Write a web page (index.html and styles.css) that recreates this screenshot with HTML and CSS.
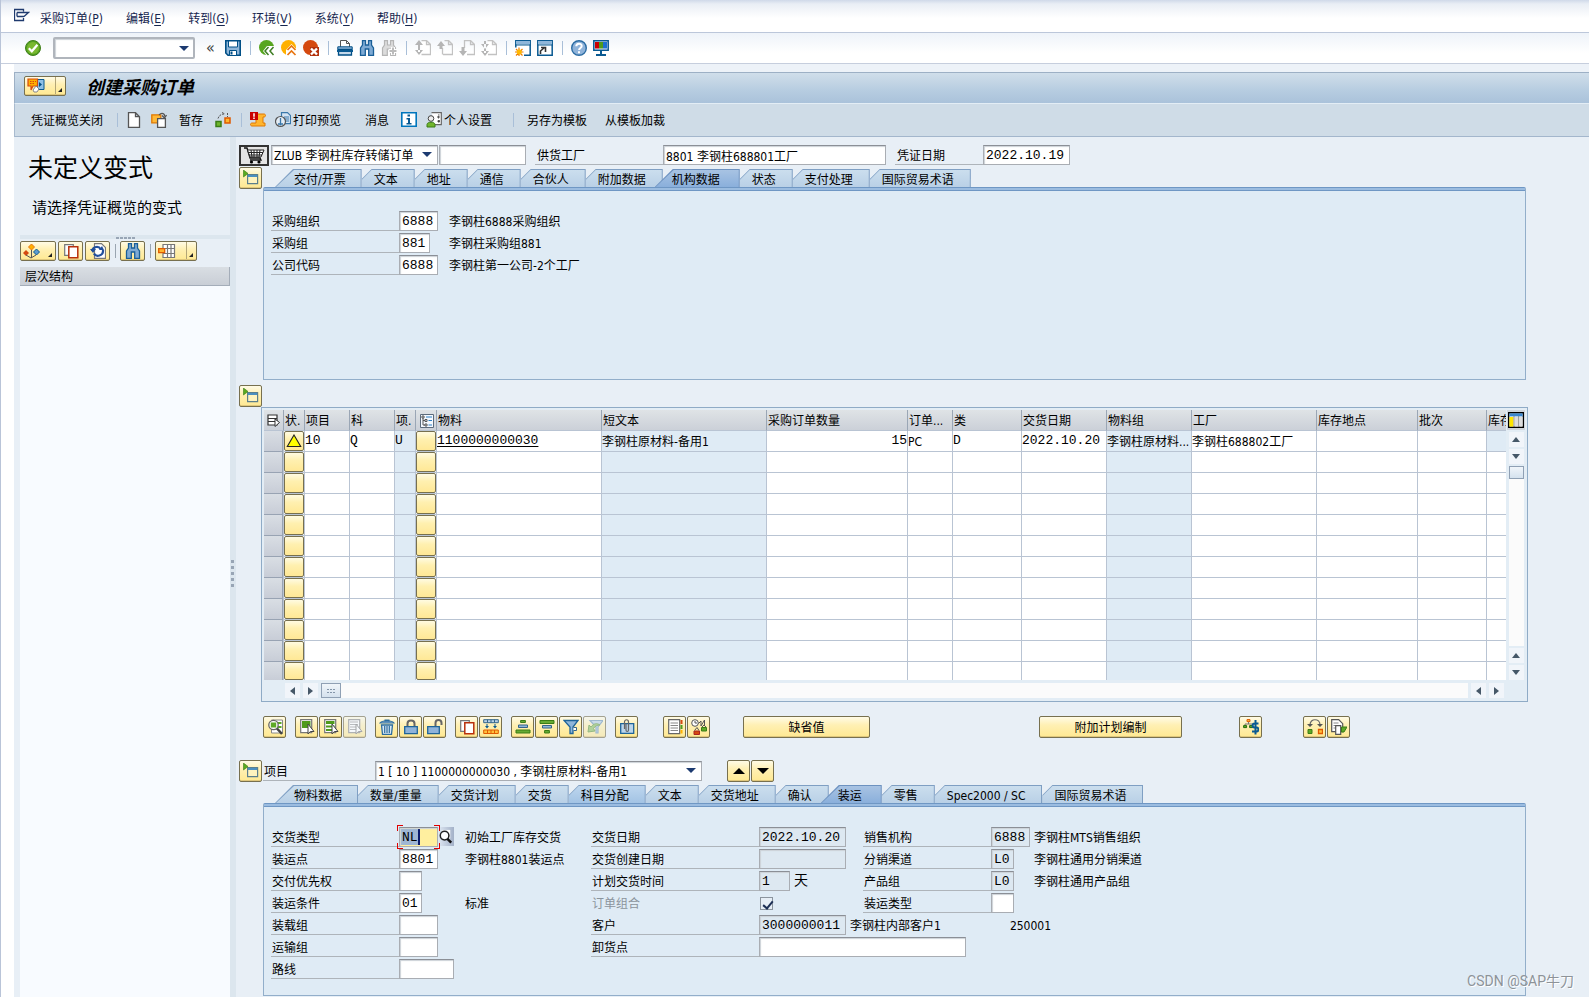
FILE: index.html
```html
<!DOCTYPE html>
<html lang="zh-CN">
<head>
<meta charset="utf-8">
<title>创建采购订单</title>
<link rel="stylesheet" href="styles.css">
</head>
<body>
<svg class="sprite" aria-hidden="true">
  <symbol id="i-sys" viewBox="0 0 16 14"><path d="M9.500 3.500V1.500H.5v11h9V10M3 4.500h11.500L10 8.500M3 8.500h7M3 4.500v4" fill="none" stroke="#1f3a6e" stroke-width="1.300"/></symbol>
  <symbol id="i-ok" viewBox="0 0 16 16"><circle cx="8" cy="8" r="7.500" fill="#54a021" stroke="#3f7f1a"/><circle cx="8" cy="8" r="6" fill="#79b82f"/><path d="M3.800 8.300l3 3 5.600-6.600" fill="none" stroke="#fff" stroke-width="2.200"/></symbol>
  <symbol id="i-save" viewBox="0 0 16 16"><path d="M.8.800h14.400v14.400H3L.8 13z" fill="#8fb6d9" stroke="#004f86" stroke-width="1.600"/><path d="M3.500 1h9v6h-9z" fill="#fff" stroke="#004f86"/><path d="M4.500 10.500h7v5h-7z" fill="#fff" stroke="#004f86"/><path d="M5.500 11.500h2v3h-2z" fill="#004f86"/></symbol>
  <symbol id="i-back" viewBox="0 0 16 16"><circle cx="7.500" cy="7.500" r="7.500" fill="#57a51f"/><path d="M4 11l4-5h8v10H8z" fill="#fff"/><path d="M9.500 7L6 11l3.500 4M14.500 7L11 11l3.500 4" fill="none" stroke="#3e7d22" stroke-width="1.500"/></symbol>
  <symbol id="i-exit" viewBox="0 0 16 16"><circle cx="7.500" cy="7.500" r="7.500" fill="#ffb000"/><path d="M5 10l5.500-6L16 10v6H5z" fill="#fff"/><path d="M6.500 10l4-4 4 4M6.500 15l4-4 4 4" fill="none" stroke="#e87511" stroke-width="1.700"/></symbol>
  <symbol id="i-cancel" viewBox="0 0 16 16"><circle cx="7.500" cy="7.500" r="7.500" fill="#d5490f"/><path d="M7 7h9v9H7z" fill="#b2320c"/><path d="M8 8.500l6 6M14 8.500l-6 6" stroke="#fff" stroke-width="2.400"/></symbol>
  <symbol id="i-print" viewBox="0 0 16 16"><path d="M3.500 7V.5h6l3 3V7M9.500.5v3h3" fill="#fff" stroke="#555"/><path d="M.8 6.800h14.400v3H.8z" fill="#8fb6d9" stroke="#004f86"/><path d="M1.500 9.500h13V15h-13z" fill="#c5d9eb" stroke="#004f86" stroke-width="1.300"/><path d="M0 10h16v2H0z" fill="#0a5a92"/></symbol>
  <symbol id="i-find" viewBox="0 0 16 16"><path d="M3.500.7h3V5h3V.7h3V5l2 3v7.300H9.700V9H6.300v6.300H1.500V8l2-3z" fill="#7eaad4" stroke="#1a5f98" stroke-width="1.300"/></symbol>
  <symbol id="i-next" viewBox="0 0 16 16"><path d="M3.500.7h3V5h3V.7h3V5l2 3v7.300H9.700V9H6.300v6.300H1.500V8l2-3z" fill="#dcdcdc" stroke="#b5b5b5" stroke-width="1.200"/><path d="M8 11h8M12 7v8" stroke="#fff" stroke-width="4"/><path d="M8.500 11h7M12 7.500v7" stroke="#bbb" stroke-width="2"/></symbol>
  <symbol id="i-pfirst" viewBox="0 0 16 16"><path d="M6.500 14.500h9v-10l-4-4h-5M11.500.5v4h4" fill="#fff" stroke="#c2c2c2" stroke-width="1.300"/><path d="M0 5l4-5 4 5zM0 10l4 5 4-5zM3 4h2v8H3z" fill="#b5b5b5"/></symbol>
  <symbol id="i-pup" viewBox="0 0 16 16"><path d="M6 14.500h9.500v-10l-4-4h-4M11.500.5v4h4M5.500 8v6.500" fill="none" stroke="#c2c2c2" stroke-width="1.300"/><path d="M0 6l4-5 4 5H5.500v3h-3V6z" fill="#b5b5b5"/></symbol>
  <symbol id="i-pdn" viewBox="0 0 16 16"><path d="M8 14.500h7.500v-10l-4-4h-6V8M11.500.5v4h4" fill="none" stroke="#c2c2c2" stroke-width="1.300"/><path d="M0 11l4 5 4-5H5.500V7h-3v4z" fill="#b5b5b5"/></symbol>
  <symbol id="i-plast" viewBox="0 0 16 16"><path d="M7 14.500h8.500v-10l-4-4h-5M11.500.5v4h4" fill="#fff" stroke="#c2c2c2" stroke-width="1.300"/><path d="M0 4l4 5 4-5zM0 11l4 5 4-5zM3 1h2v12H3z" fill="#b5b5b5"/></symbol>
  <symbol id="i-new" viewBox="0 0 16 16"><path d="M.8.800h14.400v14.400H.8z" fill="#fff" stroke="#0a5a92" stroke-width="1.500"/><path d="M1 1h14v3.500H1z" fill="#8fb6d9"/><path d="M0 5h16" stroke="#0a5a92"/><path d="M0 7.500h9V16H0z" fill="#fff"/><path d="M4 7.500v9M0 12h8.500M1 9l6.500 6.500M7.500 9L1 15.500" stroke="#ee7d00" stroke-width="1.200"/><circle cx="4.200" cy="12" r="2.500" fill="#ffb900"/></symbol>
  <symbol id="i-short" viewBox="0 0 16 16"><path d="M.8.800h14.400v14.400H.8z" fill="#fff" stroke="#0a5a92" stroke-width="1.500"/><path d="M1 1h14v3.500H1z" fill="#8fb6d9"/><path d="M0 5h16" stroke="#0a5a92"/><path d="M3.500 14v-3l4-3.500M4 7.500h4.500V12" fill="none" stroke="#333" stroke-width="1.600"/></symbol>
  <symbol id="i-help" viewBox="0 0 16 16"><circle cx="8" cy="8" r="7.300" fill="#8fb3da" stroke="#2b6ca3" stroke-width="1.400"/><path d="M5.300 6.200c0-3.400 5.400-3.300 5.400-.2 0 2-2.600 1.900-2.600 4M8 11.300v2" fill="none" stroke="#fff" stroke-width="2"/></symbol>
  <symbol id="i-lay" viewBox="0 0 16 16"><path d="M.8.800h14.400v9.400H.8z" fill="#eef" stroke="#0a5a92" stroke-width="1.500"/><path d="M2 2h4v6.500H2z" fill="#c00"/><path d="M6 2h4v6.500H6z" fill="#4f9b1c"/><path d="M10 2h4v6.500h-4z" fill="#1c6fd0"/><path d="M7 10h2v4h4v2H3v-2h4z" fill="#0a5a92"/></symbol>
  <symbol id="i-msg" viewBox="0 0 18 16"><path d="M10 1.500h7v10h-7z" fill="#8fc0e6" stroke="#0a5a92"/><path d="M12 4l3 2.500L12 9z" fill="#004f86"/><path d="M1 1h9.500v7H6l-2 4V8H1z" fill="#ffb000" stroke="#d5490f" stroke-width="1.200"/><path d="M3 3.500h6M3 5.500h5" stroke="#d5490f" stroke-dasharray="1.500 1"/><path d="M6 12l3-4 3 3-2 3H7z" fill="#fff" stroke="#888"/></symbol>
  <symbol id="i-doc" viewBox="0 0 16 16"><path d="M2.500.7h7l4 4v10.600h-11zM9.500.7v4h4" fill="#fff" stroke="#555" stroke-width="1.300"/></symbol>
  <symbol id="i-cpy" viewBox="0 0 16 16"><path d="M.8 2.800h9v8h-9z" fill="#ffb937" stroke="#e07800" stroke-width="1.300"/><path d="M6.600 6.600h7.800v8.800H6.600z" fill="#fff" stroke="#555" stroke-width="1.300"/><path d="M8 3c3-3 6-1 5.500 1.500M11 3.500l2.500 2.500L15.500 3" fill="none" stroke="#555" stroke-width="1.300"/></symbol>
  <symbol id="i-hold" viewBox="0 0 16 16"><path d="M1 9.500h5v5H1z" fill="#6fb62c" stroke="#3a7d16" stroke-width="1.500"/><path d="M10 6h5v5h-5z" fill="#ffb62e" stroke="#e05a00" stroke-width="1.500"/><path d="M3 6.500C4 3 7 2 9 2M7 .5L10 2M12.500 1v4" fill="none" stroke="#555" stroke-dasharray="2 1"/></symbol>
  <symbol id="i-scroll" viewBox="0 0 16 16"><path d="M6 2h8c2 0 2 3 0 3h-1v6h2v3H2c-2 0-2-3 0-3h4z" fill="#ffb52e" stroke="#e07800"/><path d="M0 0h8v8H0z" fill="#c90000"/><path d="M4 1.200v3.600M4 5.500V7" stroke="#fff" stroke-width="1.500"/></symbol>
  <symbol id="i-prev" viewBox="0 0 16 16"><path d="M6.500.7h6l3 3v8h-9z" fill="#d4e4f3" stroke="#3a78aa" stroke-width="1.200"/><path d="M9 5h5M9 7h5M9 9h5" stroke="#3a78aa"/><circle cx="5.500" cy="9.500" r="5" fill="#e3edf6" stroke="#555" stroke-width="1.200"/><path d="M5.500 6v4M3 12h5M5.500 9.500v4" stroke="#3a78aa" stroke-width="1.300"/></symbol>
  <symbol id="i-info" viewBox="0 0 16 16"><path d="M.8.800h14.400v13.400H.8z" fill="#fff" stroke="#0076bd" stroke-width="1.600"/><path d="M6.500 2.500H9v2H6.500zM5.500 6H9v5h1.500v1.500h-5V11H7V7.500H5.500z" fill="#0a5a92"/></symbol>
  <symbol id="i-user" viewBox="0 0 16 16"><path d="M5.500.7h9.800v12H8" fill="#fff" stroke="#666" stroke-width="1.200"/><path d="M12 3h1.500M11 5h3M12.500 4v2.500M12 8.500h1.500v1.500H12z" stroke="#555"/><circle cx="5" cy="6.500" r="2.800" fill="#eee" stroke="#444"/><path d="M1 15v-2.500c0-3 8-3 8 0V15z" fill="#71b52d" stroke="#3a7d16"/></symbol>
  <symbol id="i-exp" viewBox="0 0 16 16"><path d="M4.600 4.600h10v9h-10z" fill="#fff3be" stroke="#5b7f8c" stroke-width="1.200"/><path d="M5 5h9v2H5z" fill="#4b8fc0"/><path d="M.5 0l4.500 3.500L.5 7z" fill="#5aaa1f" stroke="#397d16" stroke-width=".6"/></symbol>
  <symbol id="i-var" viewBox="0 0 18 16"><path d="M8.500 1l3 3-3 3-3-3z" fill="#ffb000" stroke="#e87511"/><path d="M3 7l3 3-3 3-3-3z" fill="#d5490f"/><path d="M13.500 6l3 3-3 3-3-3z" fill="#5d9bd0" stroke="#0a5a92"/><path d="M8.500 7v8M3 12l5 3 5-3" fill="none" stroke="#555"/></symbol>
  <symbol id="i-copy" viewBox="0 0 16 16"><path d="M1.700 1.700h8.600v10.600H1.700z" fill="#fff" stroke="#777" stroke-width="1.200"/><path d="M5.800 3.800h9v11h-9z" fill="#fff" stroke="#b8300c" stroke-width="1.500"/></symbol>
  <symbol id="i-ref" viewBox="0 0 16 16"><path d="M4.500.7h7l4 4v10.600h-11z" fill="#fff" stroke="#777" stroke-width="1.200"/><path d="M2 8c1-5 7-5 8.500-2M13 7c.5 6-7 7.500-9 3.500" fill="none" stroke="#214f9c" stroke-width="2.200"/><path d="M0 6l3 4 3-4zM9 7h5l-2-4z" fill="#214f9c"/></symbol>
  <symbol id="i-grid" viewBox="0 0 18 16"><path d="M5 1.500h11.500v13H5zM5 5.500h11.500M5 10.500h11.500M9.500 1.500v13M13 1.500v13" fill="#fff" stroke="#777" stroke-width="1.200"/><path d="M.7 5.700h6v4h-6z" fill="#ffb52e" stroke="#e05a00" stroke-width="1.300"/></symbol>
  <symbol id="i-cart" viewBox="0 0 22 17"><path d="M1 1h3l3 10h10l1 2H7" fill="none" stroke="#111" stroke-width="1.300"/><path d="M4.500 3H21l-3 7H7z" fill="#fff" stroke="#222"/><path d="M5 5.500h15M6 8h13M8 3l1 7M11 3v7M14 3v7M17 3l-1 7" stroke="#222"/><circle cx="8.500" cy="15" r="1.600"/><circle cx="16" cy="15" r="1.600"/></symbol>
  <symbol id="i-det" viewBox="0 0 16 16"><path d="M4.500 1h11v13h-11z" fill="#fff" stroke="#888"/><path d="M11 3h3.500v2H11zM11 7h3.500v2H11z" fill="#5da927"/><circle cx="6.500" cy="6" r="4.700" fill="#fff" stroke="#666" stroke-width="1.300"/><path d="M3.800 3.500h5.400v5H3.800z" fill="#5da927"/><path d="M10 9.500l5 5.500" stroke="#444" stroke-width="2.600"/></symbol>
  <symbol id="i-sela" viewBox="0 0 16 16"><path d="M1.700.7h11v13h-11z" fill="#fff" stroke="#777" stroke-width="1.200"/><path d="M3 2h8.500v7H3z" fill="#4f9b1c"/><path d="M9 5v10l2.300-2.500h3.700z" fill="#fff" stroke="#444"/></symbol>
  <symbol id="i-sell" viewBox="0 0 16 16"><path d="M1.700.7h11v13h-11z" fill="#fff" stroke="#777" stroke-width="1.200"/><path d="M3 2h8.500v3H3zM3 6.500h8.500v2H3zM3 10h8.500v2H3z" fill="#4f9b1c"/><path d="M9 5v10l2.300-2.500h3.700z" fill="#fff" stroke="#444"/></symbol>
  <symbol id="i-seln" viewBox="0 0 16 16"><path d="M1.700.7h11v13h-11z" fill="#fff" stroke="#888" stroke-width="1.200"/><path d="M3 3h8M3 5.500h8M3 8h8M3 10.500h8" stroke="#999"/><path d="M9 5v10l2.300-2.500h3.700z" fill="#fff" stroke="#777"/></symbol>
  <symbol id="i-trash" viewBox="0 0 16 16"><path d="M1 4c2-3 12-3 14 0z" fill="#8fb6d9" stroke="#2d6d9f" stroke-width="1.200"/><path d="M5.500 1.500h5" stroke="#2d6d9f" stroke-width="2"/><path d="M2.500 6h11l-1 9.300h-9z" fill="#d8e8f5" stroke="#2d6d9f" stroke-width="1.300"/><path d="M5.700 7v7M8 7v7M10.300 7v7" stroke="#2d6d9f" stroke-width="1.200"/></symbol>
  <symbol id="i-lock" viewBox="0 0 16 16"><path d="M4.500 8V4.500c0-4 7-4 7 0V8" fill="none" stroke="#666" stroke-width="2"/><path d="M1.700 7.700h12.600v7H1.700z" fill="#8fb3da" stroke="#1f6499" stroke-width="1.300"/></symbol>
  <symbol id="i-unl" viewBox="0 0 16 16"><path d="M8.500 7V4c0-4 6-4 6 0v2" fill="none" stroke="#666" stroke-width="2"/><path d="M.7 7.700h11.600v7H.7z" fill="#8fb3da" stroke="#1f6499" stroke-width="1.300"/></symbol>
  <symbol id="i-crow" viewBox="0 0 16 16"><path d="M.7.700h14.600v3H.7zM4.500.7v3M8 .7v3M11.500.7v3" fill="#b9d2e8" stroke="#33648a"/><path d="M.7 11h14.600v3.500H.7zM4.500 11v3.500M8 11v3.500M11.500 11v3.500" fill="#ffc13b" stroke="#e05a00"/><path d="M2 7l2 2.500L6 7zM10 7l2 2.500L14 7zM3.500 5h1v2h-1zM11.500 5h1v2h-1z" fill="#0a5a92"/></symbol>
  <symbol id="i-asc" viewBox="0 0 16 16"><path d="M5.600 1.500h4.800v2H5.600z" fill="#66aa33" stroke="#3a7d16"/><path d="M3.500 6h9v2.500h-9z" fill="#8fb6d9" stroke="#33648a"/><path d="M1 11h14v3H1z" fill="#66aa33" stroke="#3a7d16"/></symbol>
  <symbol id="i-desc" viewBox="0 0 16 16"><path d="M1 1.500h14v3H1z" fill="#66aa33" stroke="#3a7d16"/><path d="M3.500 6.500h9V9h-9z" fill="#8fb6d9" stroke="#33648a"/><path d="M5.600 11.500h4.800v2.500H5.600z" fill="#66aa33" stroke="#3a7d16"/></symbol>
  <symbol id="i-fil" viewBox="0 0 16 16"><path d="M1 1.500h14L10 8v6.500H7V8z" fill="#8fb6d9" stroke="#1f6499" stroke-width="1.300"/><path d="M10.500 8.500h3v3h-3" fill="#fff" stroke="#33648a"/></symbol>
  <symbol id="i-fdel" viewBox="0 0 16 16"><path d="M3 1.500h13L11 8v6H9V8z" fill="#b5cde0" stroke="#6d96b5" stroke-width="1.200"/><path d="M1 13l1-7 2 2c3-4 6-4 9-2-3 0-5 1-6.500 3.500L8 12z" fill="#8cbf60" stroke="#5f9638"/></symbol>
  <symbol id="i-att" viewBox="0 0 16 16"><path d="M1.700 4.700h13v9.600h-13z" fill="#bcd5ea" stroke="#1f6499" stroke-width="1.300"/><path d="M5.500 10V3c0-3 4-3 4 0v8c0 2-2.500 2-2.500 0V4.500" fill="none" stroke="#666" stroke-width="1.200"/></symbol>
  <symbol id="i-note" viewBox="0 0 16 16"><path d="M1.700.7h11v14h-11z" fill="#fff" stroke="#666" stroke-width="1.200"/><path d="M3.500 4h7.500M3.500 6.500h7.500M3.500 9h7.500M3.500 11.500h7.500" stroke="#888"/><path d="M13.500 1h2v4h-2z" fill="#d5490f"/><path d="M13.500 6h2v4h-2z" fill="#4f9b1c"/><path d="M13.500 11h2v3.500h-2z" fill="#ffb000"/></symbol>
  <symbol id="i-bal" viewBox="0 0 16 16"><circle cx="4" cy="4" r="3.300" fill="#fff" stroke="#555"/><path d="M4 2v2h2M7.500 4.500L10 2v5l3.500-6v6" fill="none" stroke="#555"/><path d="M10.500 8.500h5V12h-5z" fill="#5da927" stroke="#3a7d16"/><path d="M3 12h5.500v3.500H3z" fill="#d5490f" stroke="#a22"/><path d="M3.500 11.500L6 8.500l2 3M11 8l2-2 2 2" fill="none" stroke="#555"/></symbol>
  <symbol id="i-hier" viewBox="0 0 16 16"><path d="M4 .6h3v2H4z" fill="#ffc13b" stroke="#e05a00"/><path d="M.6 6.600h3v2h-3zM6.600 6.600h3v2h-3z" fill="#5da927" stroke="#236b0b"/><path d="M5.500 3v2M2 6V5h7" fill="none" stroke="#777"/><path d="M15.500 4.500h-4c-2.500 0-2.500 4 0 4h2c2.500 0 2.500 4 0 4H9M12.500 1v14.500" fill="none" stroke="#0a5a92" stroke-width="2"/></symbol>
  <symbol id="i-tran" viewBox="0 0 16 16"><path d="M3 6C3-1 13-1 13 6" fill="none" stroke="#666" stroke-width="1.200"/><path d="M0 5h6L3 8zM10 5h6l-3 3z" fill="#555"/><path d="M1 10.500h4v4H1z" fill="#5da927" stroke="#3a7d16"/><path d="M11.500 10.500h4v4h-4z" fill="#ffc13b" stroke="#e05a00" stroke-width="1.300"/></symbol>
  <symbol id="i-dgrn" viewBox="0 0 16 16"><path d="M.7.700h7l4 4v8h-11z" fill="#fff" stroke="#555" stroke-width="1.200"/><path d="M2.500 4h5M2.500 6.500h5M2.500 9h3" stroke="#888"/><path d="M4.700 6.700h5v8.600h-5z" fill="#fff" stroke="#555" stroke-width="1.200"/><path d="M10.500 8H16l-3 5h-2.500z" fill="#5da927" stroke="#3a7d16"/></symbol>
  <symbol id="i-warn" viewBox="0 0 16 14"><path d="M8 1l6.700 11.500H1.300z" fill="#ff0" stroke="#222" stroke-width="1.100"/></symbol>
  <symbol id="i-all" viewBox="0 0 14 14"><path d="M1 1h9v10H1zM1 4.500h9M1 7.500h9" fill="#fff" stroke="#333" stroke-width="1.200"/><path d="M8 5l4.500 3.500L8 12.500z" fill="#fff" stroke="#333"/></symbol>
  <symbol id="i-list" viewBox="0 0 14 14"><path d="M.5.500h13v13H.5z" fill="#f4f9ff" stroke="#5c6b7c"/><path d="M2 2h2v2H2zM5 5.500h2v2H5zM5 10h2v2H5z" fill="none" stroke="#555"/><path d="M3 4v7h2M3 6.500h2" fill="none" stroke="#555"/><path d="M6 3h6M8.500 6.500H12M8.500 11H12" stroke="#2d7fc4"/></symbol>
  <symbol id="i-conf" viewBox="0 0 16 16"><path d="M.7.700h14.600v14.600H.7z" fill="#fff" stroke="#000" stroke-width="1.400"/><path d="M1.400 1.400h13.200v3H1.400z" fill="#3a87cf"/><path d="M1.400 5h4v9.600h-4z" fill="#ffe600"/><path d="M7 5h3v9.600H7zM11.500 5h3v9.600h-3z" fill="#ddd"/><path d="M6 4v11M10.700 4v11" stroke="#888"/></symbol>
  <symbol id="i-zoom" viewBox="0 0 17 20"><path d="M4 3h9v9H4z" fill="#fff"/><circle cx="7" cy="9" r="4.600" fill="#fff" stroke="#222" stroke-width="1.600"/><path d="M10 12.500l4 4" stroke="#111" stroke-width="2.600"/></symbol>
</svg>

<nav class="menubar" aria-label="菜单">
  <button class="plain" aria-label="系统菜单"><svg class="sysicon"><use href="#i-sys"/></svg></button>
  <button class="plain">采购订单(<u>P</u>)</button>
  <button class="plain">编辑(<u>E</u>)</button>
  <button class="plain">转到(<u>G</u>)</button>
  <button class="plain">环境(<u>V</u>)</button>
  <button class="plain">系统(<u>Y</u>)</button>
  <button class="plain">帮助(<u>H</u>)</button>
</nav>

<div class="sysbar">
  <button class="plain" aria-label="确认"><svg class="ic"><use href="#i-ok"/></svg></button>
  <span class="combo command"><input type="text" class="field" aria-label="命令"></span>
  <button class="plain chev" aria-label="收起">«</button>
  <button class="plain" aria-label="保存"><svg class="ic"><use href="#i-save"/></svg></button>
  <i class="sep"></i>
  <button class="plain" aria-label="返回"><svg class="ic"><use href="#i-back"/></svg></button>
  <button class="plain" aria-label="退出"><svg class="ic"><use href="#i-exit"/></svg></button>
  <button class="plain" aria-label="取消"><svg class="ic"><use href="#i-cancel"/></svg></button>
  <i class="sep"></i>
  <button class="plain" aria-label="打印"><svg class="ic"><use href="#i-print"/></svg></button>
  <button class="plain" aria-label="查找"><svg class="ic"><use href="#i-find"/></svg></button>
  <button class="plain" aria-label="查找下一个"><svg class="ic"><use href="#i-next"/></svg></button>
  <i class="sep"></i>
  <button class="plain" aria-label="首页"><svg class="ic"><use href="#i-pfirst"/></svg></button>
  <button class="plain" aria-label="上页"><svg class="ic"><use href="#i-pup"/></svg></button>
  <button class="plain" aria-label="下页"><svg class="ic"><use href="#i-pdn"/></svg></button>
  <button class="plain" aria-label="末页"><svg class="ic"><use href="#i-plast"/></svg></button>
  <i class="sep"></i>
  <button class="plain" aria-label="新建会话"><svg class="ic"><use href="#i-new"/></svg></button>
  <button class="plain" aria-label="快捷方式"><svg class="ic"><use href="#i-short"/></svg></button>
  <i class="sep"></i>
  <button class="plain" aria-label="帮助"><svg class="ic"><use href="#i-help"/></svg></button>
  <button class="plain" aria-label="布局"><svg class="ic"><use href="#i-lay"/></svg></button>
</div>

<div class="window">
  <header class="titlebar">
    <button class="ybtn split" aria-label="服务"><svg class="ic wide"><use href="#i-msg"/></svg></button>
    <h1>创建采购订单</h1>
  </header>
  <div class="appbar">
    <button class="plain">凭证概览关闭</button>
    <i class="sep"></i>
    <button class="plain" aria-label="新建"><svg class="ic"><use href="#i-doc"/></svg></button>
    <button class="plain gap-s" aria-label="其他采购订单"><svg class="ic"><use href="#i-cpy"/></svg></button>
    <button class="plain gap-m">暂存</button>
    <button class="plain gap-m" aria-label="检查"><svg class="ic"><use href="#i-hold"/></svg></button>
    <i class="sep near-sep"></i>
    <button class="plain" aria-label="消息"><svg class="ic"><use href="#i-scroll"/></svg></button>
    <button class="plain gap-s"><svg class="ic"><use href="#i-prev"/></svg>打印预览</button>
    <button class="plain gap-l">消息</button>
    <button class="plain gap-m" aria-label="信息"><svg class="ic"><use href="#i-info"/></svg></button>
    <button class="plain gap-s"><svg class="ic"><use href="#i-user"/></svg>个人设置</button>
    <i class="sep wide-sep"></i>
    <button class="plain">另存为模板</button>
    <button class="plain gap-t">从模板加裁</button>
  </div>

  <div class="body">
    <aside class="overview">
      <section class="intro">
        <h2>未定义变式</h2>
        <p>请选择凭证概览的变式</p>
      </section>
      <div class="hsplit"><i></i><i></i><i></i><i></i><i></i></div>
      <section class="tree">
        <div class="treebar">
          <button class="ybtn menu" aria-label="选择变式"><svg class="ic wide"><use href="#i-var"/></svg></button>
          <button class="ybtn" aria-label="复制"><svg class="ic"><use href="#i-copy"/></svg></button>
          <button class="ybtn" aria-label="刷新"><svg class="ic"><use href="#i-ref"/></svg></button>
          <i class="sep dark"></i>
          <button class="ybtn" aria-label="查找"><svg class="ic"><use href="#i-find"/></svg></button>
          <i class="sep dark"></i>
          <button class="ybtn split" aria-label="布局"><svg class="ic wide"><use href="#i-grid"/></svg></button>
        </div>
        <h3>层次结构</h3>
      </section>
    </aside>
    <div class="vsplit"><i></i><i></i><i></i><i></i><i></i></div>

    <main>
      <div class="docline">
        <button class="cart" aria-label="购物车"><svg><use href="#i-cart"/></svg></button>
        <span class="combo w-type"><select class="field" aria-label="订单类型"><option>ZLUB 李钢柱库存转储订单</option></select></span>
        <input type="text" class="field w-date gap1" aria-label="订单编号">
        <label class="lab w-l gap9" for="plant">供货工厂</label><input id="plant" type="text" class="field sans w-plant" value="8801 李钢柱688801工厂">
        <label class="lab w-s gap9" for="docdate">凭证日期</label><input id="docdate" type="text" class="field w-date" value="2022.10.19">
      </div>

      <div class="block">
        <button class="ybtn" aria-label="展开抬头"><svg class="ic"><use href="#i-exp"/></svg></button>
        <div class="tabbox">
          <div class="tabs" role="tablist">
            <button role="tab">交付/开票</button><button role="tab">文本</button><button role="tab">地址</button><button role="tab">通信</button><button role="tab">合伙人</button><button role="tab">附加数据</button><button role="tab" class="on" aria-selected="true">机构数据</button><button role="tab">状态</button><button role="tab">支付处理</button><button role="tab">国际贸易术语</button>
          </div>
          <div class="panel org">
            <div class="row"><label class="lab w-l" for="ekorg">采购组织</label><input id="ekorg" class="field w4" value="6888"><span class="txt">李钢柱6888采购组织</span></div>
            <div class="row"><label class="lab w-l" for="ekgrp">采购组</label><span class="slot"><input id="ekgrp" class="field w3" value="881"></span><span class="txt">李钢柱采购组881</span></div>
            <div class="row"><label class="lab w-l" for="bukrs">公司代码</label><input id="bukrs" class="field w4" value="6888"><span class="txt">李钢柱第一公司-2个工厂</span></div>
          </div>
        </div>
      </div>

      <button class="ybtn items-toggle" aria-label="展开项目概览"><svg class="ic"><use href="#i-exp"/></svg></button>
      <div class="gridbox">
        <div class="gridtop">
          <div class="tablewrap">
          <table>
            <colgroup><col class="c19"><col class="c21"><col class="c45"><col class="c45"><col class="c21"><col class="c21"><col class="c165"><col class="c165"><col class="c141"><col class="c45"><col class="c69"><col class="c85"><col class="c85"><col class="c125"><col class="c101"><col class="c69"><col class="c20"></colgroup>
            <thead><tr><th class="pic"><svg aria-label="全选"><use href="#i-all"/></svg></th><th>状.</th><th>项目</th><th>科</th><th>项.</th><th class="pic"><svg aria-label="层次"><use href="#i-list"/></svg></th><th>物料</th><th>短文本</th><th>采购订单数量</th><th>订单...</th><th>类</th><th>交货日期</th><th>物料组</th><th>工厂</th><th>库存地点</th><th>批次</th><th>库存</th></tr></thead>
            <tbody>
              <tr><td></td><td><button class="cellbtn" aria-label="警告"><svg class="ic-warn"><use href="#i-warn"/></svg></button></td><td class="mono">10</td><td class="mono">Q</td><td class="mono">U</td><td><button class="cellbtn" aria-label="明细"></button></td><td class="mono"><a href="#">1100000000030</a></td><td>李钢柱原材料-备用1</td><td class="mono num">15</td><td>PC</td><td class="mono">D</td><td class="mono">2022.10.20</td><td>李钢柱原材料...</td><td>李钢柱688802工厂</td><td></td><td></td><td class="ro"></td></tr>
              <tr><td></td><td><button class="cellbtn" aria-label="状态"></button></td><td></td><td></td><td></td><td><button class="cellbtn" aria-label="明细"></button></td><td></td><td></td><td></td><td></td><td></td><td></td><td></td><td></td><td></td><td></td><td></td></tr>
              <tr><td></td><td><button class="cellbtn" aria-label="状态"></button></td><td></td><td></td><td></td><td><button class="cellbtn" aria-label="明细"></button></td><td></td><td></td><td></td><td></td><td></td><td></td><td></td><td></td><td></td><td></td><td></td></tr>
              <tr><td></td><td><button class="cellbtn" aria-label="状态"></button></td><td></td><td></td><td></td><td><button class="cellbtn" aria-label="明细"></button></td><td></td><td></td><td></td><td></td><td></td><td></td><td></td><td></td><td></td><td></td><td></td></tr>
              <tr><td></td><td><button class="cellbtn" aria-label="状态"></button></td><td></td><td></td><td></td><td><button class="cellbtn" aria-label="明细"></button></td><td></td><td></td><td></td><td></td><td></td><td></td><td></td><td></td><td></td><td></td><td></td></tr>
              <tr><td></td><td><button class="cellbtn" aria-label="状态"></button></td><td></td><td></td><td></td><td><button class="cellbtn" aria-label="明细"></button></td><td></td><td></td><td></td><td></td><td></td><td></td><td></td><td></td><td></td><td></td><td></td></tr>
              <tr><td></td><td><button class="cellbtn" aria-label="状态"></button></td><td></td><td></td><td></td><td><button class="cellbtn" aria-label="明细"></button></td><td></td><td></td><td></td><td></td><td></td><td></td><td></td><td></td><td></td><td></td><td></td></tr>
              <tr><td></td><td><button class="cellbtn" aria-label="状态"></button></td><td></td><td></td><td></td><td><button class="cellbtn" aria-label="明细"></button></td><td></td><td></td><td></td><td></td><td></td><td></td><td></td><td></td><td></td><td></td><td></td></tr>
              <tr><td></td><td><button class="cellbtn" aria-label="状态"></button></td><td></td><td></td><td></td><td><button class="cellbtn" aria-label="明细"></button></td><td></td><td></td><td></td><td></td><td></td><td></td><td></td><td></td><td></td><td></td><td></td></tr>
              <tr><td></td><td><button class="cellbtn" aria-label="状态"></button></td><td></td><td></td><td></td><td><button class="cellbtn" aria-label="明细"></button></td><td></td><td></td><td></td><td></td><td></td><td></td><td></td><td></td><td></td><td></td><td></td></tr>
              <tr><td></td><td><button class="cellbtn" aria-label="状态"></button></td><td></td><td></td><td></td><td><button class="cellbtn" aria-label="明细"></button></td><td></td><td></td><td></td><td></td><td></td><td></td><td></td><td></td><td></td><td></td><td></td></tr>
              <tr><td></td><td><button class="cellbtn" aria-label="状态"></button></td><td></td><td></td><td></td><td><button class="cellbtn" aria-label="明细"></button></td><td></td><td></td><td></td><td></td><td></td><td></td><td></td><td></td><td></td><td></td><td></td></tr>
            </tbody>
          </table>
          </div>
          <div class="vscroll">
            <button class="conf" aria-label="表设置"><svg><use href="#i-conf"/></svg></button>
            <button class="arr up" aria-label="上"></button><button class="arr down" aria-label="下"></button>
            <div class="track"><span class="thumb"></span></div>
            <button class="arr up" aria-label="上页"></button><button class="arr down" aria-label="下页"></button>
          </div>
        </div>
        <div class="hscroll">
          <button class="arr left" aria-label="左"></button><button class="arr right" aria-label="右"></button>
          <div class="track"><span class="thumb"><i></i><i></i><i></i><i></i><i></i><i></i></span></div>
          <button class="arr left" aria-label="左页"></button><button class="arr right" aria-label="右页"></button>
        </div>
      </div>

      <div class="itembar">
        <div class="grp"><button class="ybtn" aria-label="明细"><svg class="ic"><use href="#i-det"/></svg></button></div>
        <div class="grp"><button class="ybtn" aria-label="全选"><svg class="ic"><use href="#i-sela"/></svg></button><button class="ybtn" aria-label="选择块"><svg class="ic"><use href="#i-sell"/></svg></button><button class="ybtn off" disabled aria-label="取消选择"><svg class="ic"><use href="#i-seln"/></svg></button></div>
        <div class="grp"><button class="ybtn" aria-label="删除"><svg class="ic"><use href="#i-trash"/></svg></button><button class="ybtn" aria-label="锁定"><svg class="ic"><use href="#i-lock"/></svg></button><button class="ybtn" aria-label="解锁"><svg class="ic"><use href="#i-unl"/></svg></button></div>
        <div class="grp"><button class="ybtn" aria-label="复制"><svg class="ic"><use href="#i-copy"/></svg></button><button class="ybtn" aria-label="复制行"><svg class="ic"><use href="#i-crow"/></svg></button></div>
        <div class="grp"><button class="ybtn" aria-label="升序"><svg class="ic"><use href="#i-asc"/></svg></button><button class="ybtn" aria-label="降序"><svg class="ic"><use href="#i-desc"/></svg></button><button class="ybtn" aria-label="过滤"><svg class="ic"><use href="#i-fil"/></svg></button><button class="ybtn off" disabled aria-label="删除过滤"><svg class="ic"><use href="#i-fdel"/></svg></button></div>
        <div class="grp"><button class="ybtn" aria-label="附件"><svg class="ic"><use href="#i-att"/></svg></button></div>
        <div class="grp far"><button class="ybtn" aria-label="注释"><svg class="ic"><use href="#i-note"/></svg></button><button class="ybtn" aria-label="平衡"><svg class="ic"><use href="#i-bal"/></svg></button></div>
        <button class="ybtn text defaults">缺省值</button>
        <button class="ybtn text planning">附加计划编制</button>
        <button class="ybtn price" aria-label="价格"><svg class="ic"><use href="#i-hier"/></svg></button>
        <div class="grp last"><button class="ybtn" aria-label="转换"><svg class="ic"><use href="#i-tran"/></svg></button><button class="ybtn" aria-label="单据"><svg class="ic"><use href="#i-dgrn"/></svg></button></div>
      </div>

      <div class="itemline">
        <button class="ybtn" aria-label="展开项目明细"><svg class="ic"><use href="#i-exp"/></svg></button>
        <label class="lab w-item" for="item">项目</label><span class="combo w-pick"><select id="item" class="field"><option>1 [ 10 ] 1100000000030 , 李钢柱原材料-备用1</option></select></span>
        <div class="grp nav"><button class="ybtn tri up" aria-label="上一项目"></button><button class="ybtn tri down" aria-label="下一项目"></button></div>
      </div>

      <div class="tabbox indent">
        <div class="tabs" role="tablist">
          <button role="tab">物料数据</button><button role="tab">数量/重量</button><button role="tab">交货计划</button><button role="tab">交货</button><button role="tab" class="hint">科目分配</button><button role="tab">文本</button><button role="tab">交货地址</button><button role="tab">确认</button><button role="tab" class="on" aria-selected="true">装运</button><button role="tab">零售</button><button role="tab">Spec2000 / SC</button><button role="tab">国际贸易术语</button>
        </div>
        <div class="panel ship">
          <div class="col col-a">
            <div class="row"><label class="lab w-l" for="dtype">交货类型</label><span class="focus"><input id="dtype" class="field w4" value="NL"></span><button class="f4" aria-label="搜索帮助"><svg><use href="#i-zoom"/></svg></button><span class="txt">初始工厂库存交货</span></div>
            <div class="row"><label class="lab w-l" for="spt">装运点</label><span class="slot wide-slot"><input id="spt" class="field w4" value="8801"></span><span class="txt near">李钢柱8801装运点</span></div>
            <div class="row"><label class="lab w-l" for="prio">交付优先权</label><input id="prio" class="field w2"></div>
            <div class="row"><label class="lab w-l" for="cond">装运条件</label><span class="slot wide-slot"><input id="cond" class="field w2" value="01"></span><span class="txt near">标准</span></div>
            <div class="row"><label class="lab w-l" for="lgrp">装载组</label><input id="lgrp" class="field w4"></div>
            <div class="row"><label class="lab w-l" for="tgrp">运输组</label><input id="tgrp" class="field w4"></div>
            <div class="row"><label class="lab w-l" for="route">路线</label><input id="route" class="field w6"></div>
          </div>
          <div class="col col-b">
            <div class="row"><label class="lab w-xl" for="ddate">交货日期</label><input id="ddate" class="field w-date" readonly value="2022.10.20"></div>
            <div class="row"><label class="lab w-xl" for="dcreate">交货创建日期</label><input id="dcreate" class="field w-date" readonly></div>
            <div class="row"><label class="lab w-xl" for="ptime">计划交货时间</label><input id="ptime" class="field w3" readonly value="1"><span class="unit">天</span></div>
            <div class="row"><label class="lab w-xl dim" for="comb">订单组合</label><input id="comb" type="checkbox" checked></div>
            <div class="row"><label class="lab w-xl" for="cust">客户</label><input id="cust" class="field w-date" readonly value="3000000011"><span class="unit small">李钢柱内部客户1</span><span class="zip">250001</span></div>
            <div class="row"><label class="lab w-xl" for="unload">卸货点</label><input id="unload" class="field w-unload"></div>
          </div>
          <div class="col">
            <div class="row"><label class="lab w-l" for="vkorg">销售机构</label><span class="slot"><input id="vkorg" class="field w4" readonly value="6888"></span><span class="unit small">李钢柱MTS销售组织</span></div>
            <div class="row"><label class="lab w-l" for="vtweg">分销渠道</label><span class="slot"><input id="vtweg" class="field w2" readonly value="L0"></span><span class="unit small">李钢柱通用分销渠道</span></div>
            <div class="row"><label class="lab w-l" for="spart">产品组</label><span class="slot"><input id="spart" class="field w2" readonly value="L0"></span><span class="unit small">李钢柱通用产品组</span></div>
            <div class="row"><label class="lab w-l" for="stype">装运类型</label><input id="stype" class="field w2"></div>
          </div>
        </div>
      </div>
    </main>
  </div>
</div>
<div class="watermark">CSDN @SAP牛刀</div>
</body>
</html>
```

FILE: styles.css
```css
* { box-sizing: border-box; }

body {
  margin: 0;
  min-height: 100vh;
  display: flex;
  flex-direction: column;
  position: relative;
  overflow-x: hidden;
  background: #fff;
  border-left: 1px solid #b9c4d8;
  font: 12px/18px "DejaVu Sans Condensed", "Noto Sans CJK SC", sans-serif;
  color: #000;
}

button, input, select { font: inherit; color: inherit; margin: 0; }
h1, h2, h3, p { margin: 0; }
.sprite { position: absolute; width: 0; height: 0; }
.ic { width: 16px; height: 16px; flex: none; display: block; }
.ic.wide { width: 18px; }

.plain {
  display: flex;
  align-items: center;
  gap: 2px;
  padding: 0;
  border: 0;
  background: none;
  white-space: nowrap;
}

.sep {
  flex: none;
  width: 6px;
  height: 14px;
  background: linear-gradient(#a9bfd8, #a9bfd8) 3px 0 / 1px 100% no-repeat;
}
.sep.dark { background-image: linear-gradient(#9aa5b0, #9aa5b0); }

/* menu and system bars */
.menubar {
  display: flex;
  align-items: center;
  gap: 23px;
  height: 33px;
  padding: 5px 0 0 13px;
  background: linear-gradient(#cfd9e9, #e9eef5 4px, #fff 18px);
  border-bottom: 1px solid #bcc7da;
  color: #16264f;
}
.menubar .plain { display: block; }
.menubar .plain:first-child { margin-right: -13px; }
.menubar u { text-underline-offset: 2px; }
.sysicon { display: block; width: 16px; height: 14px; margin-bottom: 7px; }

.sysbar {
  display: flex;
  align-items: center;
  gap: 6px;
  height: 31px;
  padding: 0 0 0 24px;
  background: linear-gradient(#eef3f9, #fff 20px);
  border-bottom: 1px solid #c6cedd;
}
.command { width: 142px; margin-left: 6px; }
.command .field { height: 22px; border-width: 2px; border-color: #b0b5bc; border-radius: 2px; }
.chev { width: 11px; margin: 0 2px 0 5px; font-size: 16px; color: #444; }

.combo { position: relative; display: block; flex: none; }
.combo .field { width: 100%; }
.combo::after {
  content: "";
  position: absolute;
  right: 6px;
  top: 7px;
  border: 5px solid transparent;
  border-top-color: #1c3a70;
  border-bottom: 0;
  pointer-events: none;
}
.command::after { top: 9px; }

/* window frame */
.window {
  flex: 1;
  display: flex;
  flex-direction: column;
  margin: 0 0 0 13px;
  border-top: 8px solid #edf2f8;
}
.titlebar {
  display: flex;
  align-items: center;
  gap: 20px;
  height: 32px;
  padding: 0 0 4px 9px;
  background: linear-gradient(#d0deea, #b6cce0 60%, #aac2da);
  border: solid #9db0c5;
  border-width: 1px 0 0 1px;
  border-bottom: 1px solid #e3edf5;
}
.titlebar h1 { font: italic bold 18px/24px "Noto Sans CJK SC", sans-serif; }

.appbar {
  display: flex;
  align-items: center;
  height: 33px;
  padding-left: 16px;
  background: #cfdce7;
  border-bottom: 1px solid #a3b6cc;
  border-left: 1px solid #a9bbcf;
}
.appbar .plain { padding-top: 1px; }
.appbar .ic { margin-bottom: 2px; }
.appbar .sep { margin: 0 6px 0 11px; }
.appbar .near-sep { margin-left: 7px; }
.appbar .wide-sep { margin: 0 11px 0 18px; }
.gap-s { margin-left: 9px; }
.gap-m { margin-left: 12px; }
.gap-l { margin-left: 24px; }
.gap-t { margin-left: 18px; }

.body { flex: 1; display: flex; }

/* yellow push buttons */
.ybtn {
  display: flex;
  align-items: center;
  justify-content: center;
  flex: none;
  width: 23px;
  height: 22px;
  padding: 0;
  background: linear-gradient(#fffbe6, #fff0b4 40%, #ffe992);
  border: 1px solid #77704f;
  border-radius: 2px;
  box-shadow: inset 0 -1px #dfc77c;
}
.ybtn.off { opacity: .6; }
.ybtn.menu, .ybtn.split { position: relative; justify-content: flex-start; padding-left: 2px; width: 42px; height: 20px; }
.ybtn.menu::after, .ybtn.split::after {
  content: "";
  position: absolute;
  right: 3px;
  bottom: 3px;
  border: 2px solid #222;
  border-top-color: transparent;
  border-left-color: transparent;
}
.ybtn.split {
  background: linear-gradient(#b3a677, #b3a677) 30px 0 / 1px 100% no-repeat, linear-gradient(#fffbe6, #fff0b4 40%, #ffe992);
}

/* document overview */
.overview { flex: none; width: 216px; display: flex; flex-direction: column; background: #e8eff6; }
.intro { height: 98px; padding: 15px 0 0 14px; }
.intro h2 { font-size: 25px; line-height: 34px; font-weight: normal; }
.intro p { font-size: 15px; line-height: 22px; margin: 11px 0 0 4px; white-space: nowrap; }
.hsplit {
  display: flex;
  gap: 1px;
  justify-content: center;
  height: 6px;
  padding-top: 2px;
  margin-left: 6px;
  background: linear-gradient(#dce6ee, #dce6ee) 0 0 / 100% 4px no-repeat;
}
.hsplit i { width: 3px; height: 2px; background: #98a5b5; }
.tree { flex: 1; display: flex; flex-direction: column; margin-left: 6px; background: linear-gradient(#e8eff6, #e8eff6) 0 0 / 100% 26px no-repeat, #f8fbff; }
.treebar { display: flex; align-items: center; gap: 2px; height: 20px; margin-bottom: 6px; }
.treebar .ybtn { height: 20px; width: 25px; }
.treebar .ybtn.menu { width: 36px; }
.treebar .ybtn.split { width: 42px; }
.tree h3 {
  font: inherit;
  height: 19px;
  padding: 1px 0 0 5px;
  background: linear-gradient(#d9dee3, #c9ced6);
  border: solid #a4adb9;
  border-width: 0 1px 1px 0;
}
.vsplit {
  flex: none;
  width: 6px;
  display: flex;
  flex-direction: column;
  gap: 3px;
  align-items: flex-start;
  padding: 423px 0 0 1px;
  background: #dce6ee;
}
.vsplit i { width: 3px; height: 3px; background: #98a5b5; }

/* work area */
main {
  flex: 1;
  min-width: 0;
  padding: 8px 61px 1px 3px;
  background: #e8eff6;
}

.field {
  display: block;
  flex: none;
  height: 20px;
  padding: 0 0 0 2px;
  border: 1px solid #a9adb3;
  border-top-color: #8b8f96;
  border-radius: 0;
  background: #fff;
  box-shadow: inset 1px 1px 1px #ccd2d8;
  font-family: "Liberation Mono", "Noto Sans CJK SC", monospace;
  font-size: 13px;
  line-height: 16px;
  outline: 0;
  appearance: none;
}
.field[readonly] { background: #dde8f1; }
select.field, .field.sans { font-family: "DejaVu Sans Condensed", "Noto Sans CJK SC", sans-serif; font-size: 12px; }
select.field { padding-top: 1px; }
.lab { flex: none; height: 20px; padding: 3px 0 0 1px; line-height: 16px; border-bottom: 1px solid #aeb4ba; white-space: nowrap; }
.lab.dim { color: #8b949c; border-color: transparent; }
.w-l { width: 128px; }
.w-s { width: 88px; }
.w-xl { width: 168px; }
.w-item { width: 112px; }
.w2 { width: 23px; }
.w3 { width: 31px; }
.w4 { width: 39px; }
.w6 { width: 55px; }
.w-date { width: 87px; }
.w-type { width: 167px; }
.w-plant { width: 223px; }
.w-pick { width: 327px; }
.w-unload { width: 207px; }
.gap1 { margin-left: 1px; }
.gap9 { margin-left: 9px; }

.docline { display: flex; align-items: flex-start; height: 22px; }
.docline .lab { padding-left: 2px; }
.cart {
  display: flex;
  justify-content: center;
  align-items: center;
  width: 30px;
  height: 21px;
  margin-right: 2px;
  padding: 0;
  background: #e4e4e4;
  border: 2px solid #333;
}
.cart svg { width: 22px; height: 17px; }

.block { display: flex; gap: 1px; align-items: flex-start; }
.tabbox { flex: 1; min-width: 0; margin-right: 2px; padding-top: 2px; }
.tabbox.indent { margin-left: 24px; padding-top: 3px; }

.tabs { display: flex; padding-left: 12px; height: 18px; }
.tabs button {
  position: relative;
  isolation: isolate;
  padding: 4px 17px 0 12px;
  border: 0;
  background: none;
  line-height: 14px;
  white-space: nowrap;
}
.tabs button:first-child { padding: 4px 16px 0 19px; }
.tabs button::before, .tabs button::after {
  content: "";
  position: absolute;
  z-index: -1;
  inset: 0;
  background: #7f9fc3;
  clip-path: polygon(0 10px, 10px 0, 100% 0, 100% 100%, 0 100%);
}
.tabs button::after {
  inset: 1px 1px 0 0;
  background: linear-gradient(#cbdeee, #b9d0e6);
}
.tabs button:first-child::before, .tabs button:first-child::after { clip-path: polygon(0 100%, 18px 0, 100% 0, 100% 100%); }
.tabs button:first-child::after { left: 1px; }
.tabs .hint::after { background: linear-gradient(#bdd6ee, #a3c3e4); }
.tabs button.on { z-index: 1; padding: 4px 20px 0 9px; }
.tabs .on::before, .tabs .on::after { left: -8px; clip-path: polygon(0 100%, 18px 0, 100% 0, 100% 100%); }
.tabs .on::before { background: #6d92c0; }
.tabs .on::after { left: -7px; background: linear-gradient(#a8c3e3, #8aafdb); }

.panel {
  padding: 23px 8px 14px 7px;
  border: 1px solid #92aeca;
  border-top: 1px solid #6f97c4;
  background: linear-gradient(#9bbce0 2px, #6f97c4 2px, #6f97c4 3px, transparent 3px), #dfebf5;
  border-radius: 2px 2px 0 0;
}
.org { min-height: 193px; }
.row { display: flex; height: 22px; white-space: nowrap; }
.slot { flex: none; width: 39px; }
.wide-slot { width: 57px; }
.txt { padding: 2px 0 0 11px; }
.txt.near { padding-left: 9px; }
.unit { padding: 0 0 0 4px; font-size: 14px; }
.unit.small { padding-top: 2px; font-size: 12px; }
.zip { padding: 2px 0 0 69px; }

.ship { display: flex; }
.col-a { flex: none; width: 320px; }
.col-b { flex: none; width: 272px; }

.focus { position: relative; display: block; width: 39px; height: 20px; flex: none; }
.focus .field { background: linear-gradient(#0b1a6b, #0b1a6b) 18px 1px / 2px 16px no-repeat, linear-gradient(#9fb6d3, #9fb6d3) 1px 1px / 17px 16px no-repeat, #ffef9f; }
.focus::after {
  --c: linear-gradient(#e00000, #e00000);
  content: "";
  position: absolute;
  z-index: 1;
  inset: -2px;
  pointer-events: none;
  background:
    var(--c) 0 0 / 6px 1px, var(--c) 0 0 / 1px 6px,
    var(--c) 100% 0 / 6px 1px, var(--c) 100% 0 / 1px 6px,
    var(--c) 0 100% / 6px 1px, var(--c) 0 100% / 1px 6px,
    var(--c) 100% 100% / 6px 1px, var(--c) 100% 100% / 1px 6px;
  background-repeat: no-repeat;
}
.f4 { width: 16px; height: 19px; padding: 0; border: 0; background: linear-gradient(90deg, #dfe8f3, #a3b1c8); }
.f4 svg { display: block; width: 16px; height: 19px; }
input[type="checkbox"] {
  position: relative;
  appearance: none;
  width: 13px;
  height: 13px;
  margin: 4px 0 0 1px;
  background: #e6eef6;
  border: 1px solid #8b949e;
}
input[type="checkbox"]::after {
  content: "";
  position: absolute;
  left: 4px;
  top: 1px;
  width: 4px;
  height: 8px;
  border: solid #1c2f55;
  border-width: 0 2px 2px 0;
  transform: rotate(40deg);
}

/* item overview */
.items-toggle { margin-top: 5px; }
.gridbox { margin-left: 22px; padding: 2px 2px 3px; border: 1px solid #8fabc6; background: #e3edf5; }
.gridtop { display: flex; gap: 1px; }
.tablewrap { flex: 1; min-width: 0; overflow: hidden; }
table { width: 100%; table-layout: fixed; border-collapse: separate; border-spacing: 0; }
.c19 { width: 19px; } .c20 { width: 20px; } .c21 { width: 21px; } .c45 { width: 45px; } .c69 { width: 69px; }
.c85 { width: 85px; } .c101 { width: 101px; } .c125 { width: 125px; }
.c141 { width: 141px; } .c165 { width: 165px; }
th, td { height: 21px; padding: 0; overflow: hidden; white-space: nowrap; line-height: 18px; border-bottom: 1px solid #b9c4d3; border-left: 1px solid #b9c4d3; }
th { padding: 2px 0 0 1px; font-weight: normal; text-align: left; background: linear-gradient(#dfe3e6, #cbd0d8); border-left-color: #9aa6b5; }
th.pic svg { display: block; width: 14px; height: 14px; margin: 0 auto; }
td { background: #fff; padding-top: 2px; }
td.mono { padding-top: 0; font-family: "Liberation Mono", monospace; font-size: 13px; }
td:nth-child(2), td:nth-child(6) { padding: 0; }
td.num { text-align: right; }
td a { color: inherit; text-underline-offset: 2px; }
td:nth-child(5), td:nth-child(8), td:nth-child(13), td.ro { background: #dfebf5; }
th:first-child, td:first-child { border-left: 0; }
td:first-child { background: linear-gradient(#d9dee4, #c8cdd7); border-right: 1px solid #98a3b3; border-bottom-color: #98a3b3; }
tbody tr:last-child td { height: 18px; border-bottom: 0; }
.cellbtn {
  display: block;
  width: 100%;
  height: 20px;
  padding: 0;
  background: linear-gradient(#fffbe2, #fff0b0 40%, #ffe896);
  border: 1px solid #77704f;
  border-radius: 2px;
}
tbody tr:last-child .cellbtn { height: 18px; }
.ic-warn { display: block; width: 16px; height: 14px; margin: 0 auto; }

.vscroll { flex: none; display: flex; flex-direction: column; align-items: center; gap: 2px; width: 18px; }
.conf { width: 18px; height: 20px; padding: 0 1px; border: 0; background: #cfd5dc; }
.conf svg { display: block; width: 16px; height: 16px; }
.arr { display: grid; place-items: center; flex: none; width: 15px; height: 15px; padding: 0; border: 0; background: #f1f5fa; }
.arr::before { content: ""; border: 4px solid transparent; }
.arr.up::before { border-top: 0; border-bottom: 5px solid #465868; }
.arr.down::before { border-bottom: 0; border-top: 5px solid #465868; }
.arr.left::before { border-left: 0; border-right: 5px solid #465868; }
.arr.right::before { border-right: 0; border-left: 5px solid #465868; }
.track { flex: 1; background: #fbfbfb; }
.vscroll .track { width: 15px; }
.thumb { display: grid; border: 1px solid #8fa0b4; background: linear-gradient(#f0f5fa, #d5e2ee); }
.vscroll .thumb { height: 13px; }
.hscroll { display: flex; gap: 3px; height: 15px; margin: 3px 21px 0; }
.hscroll .thumb { width: 20px; height: 15px; grid-template-columns: repeat(3, 2px); gap: 2px 1px; place-content: center; }
.thumb i { width: 2px; height: 1px; background: #8496aa; }

.itembar { display: flex; align-items: center; gap: 9px; margin: 14px 0 22px 24px; }
.grp { display: flex; gap: 1px; }
.grp.far { margin-left: 16px; }
.ybtn.text { padding-top: 2px; line-height: 18px; }
.defaults { width: 127px; margin-left: 24px; }
.planning { width: 143px; margin-left: 160px; }
.price { margin-left: 48px; }
.grp.last { margin-left: 32px; }

.itemline { display: flex; align-items: center; height: 22px; }
.itemline .lab { margin-left: 1px; }
.grp.nav { margin-left: 25px; }
.tri::before { content: ""; border: 6px solid transparent; }
.tri.up::before { border-top: 0; border-bottom-color: #000; }
.tri.down::before { border-bottom: 0; border-top-color: #000; }

.watermark {
  position: absolute;
  right: 15px;
  bottom: 6px;
  font: 14px/20px Roboto, "Noto Sans CJK SC", sans-serif;
  color: #8d9399;
  text-shadow: 1px 1px #fff;
}
```
